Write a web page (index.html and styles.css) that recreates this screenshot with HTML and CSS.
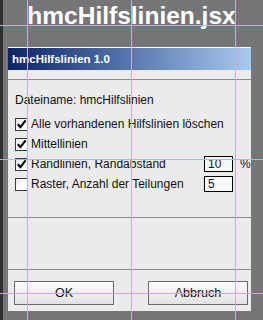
FILE: index.html
```html
<!DOCTYPE html>
<html lang="de">
<head>
<meta charset="UTF-8">
<meta name="viewport" content="width=device-width, initial-scale=1.0">
<title>hmcHilfslinien.jsx</title>
<link rel="stylesheet" href="styles.css">
</head>
<body>

<div class="screen">
  <h1 class="script-name">hmcHilfslinien.jsx</h1>

  <div class="dialog">
    <div class="titlebar">hmcHilfslinien 1.0</div>

    <div class="panel panel-main">
      <p class="filename">Dateiname: hmcHilfslinien</p>

      <div class="option">
        <span class="check checked"><svg viewBox="0 0 13 13"><path d="M2.8 6.2 L5.4 9.2 L10.6 2.4"/></svg></span>
        <span class="option-text">Alle vorhandenen Hilfslinien löschen</span>
      </div>
      <div class="option">
        <span class="check checked"><svg viewBox="0 0 13 13"><path d="M2.8 6.2 L5.4 9.2 L10.6 2.4"/></svg></span>
        <span class="option-text">Mittellinien</span>
      </div>
      <div class="option">
        <span class="check checked"><svg viewBox="0 0 13 13"><path d="M2.8 6.2 L5.4 9.2 L10.6 2.4"/></svg></span>
        <span class="option-text">Randlinien, Randabstand</span>
        <span class="field">10</span>
        <span class="unit">%</span>
      </div>
      <div class="option">
        <span class="check"></span>
        <span class="option-text">Raster, Anzahl der Teilungen</span>
        <span class="field">5</span>
        <span class="unit"></span>
      </div>
    </div>

    <div class="panel panel-empty"></div>

    <div class="buttons">
      <button class="btn">OK</button>
      <button class="btn">Abbruch</button>
    </div>
  </div>

  <!-- guides lie over everything -->
  <div class="guide guide-v" style="left:27px"></div>
  <div class="guide guide-v" style="left:131px"></div>
  <div class="guide guide-v" style="left:235px"></div>
  <div class="guide guide-h" style="top:25px"></div>
  <div class="guide guide-h" style="top:159px"></div>
  <div class="guide guide-h" style="top:293px"></div>
</div>

</body>
</html>
```

FILE: styles.css
```css
* {
  box-sizing: border-box;
  font-family: "Liberation Sans", Arial, sans-serif;
}
body {
  margin: 0;
  background: #777;
}
.screen {
  position: relative;
  width: 263px;
  height: 320px;
  overflow: hidden;
  background: #767676;
  box-shadow: inset 3px 0 0 #2f2f2f;
}

.script-name {
  margin: 0;
  height: 47px;
  padding-top: 4px;
  font-size: 24.5px;
  line-height: 1;
  font-weight: bold;
  color: #fff;
  text-align: center;
}

.dialog {
  margin: 0 12px 0 8px;
  height: 264px;
  background: #ebebeb;
  border-top: 1px solid #fff;
  display: flex;
  flex-direction: column;
}

.titlebar {
  height: 22px;
  padding-left: 4px;
  line-height: 22px;
  font-size: 11.5px;
  font-weight: bold;
  color: #fff;
  background: linear-gradient(90deg, #0a246a, #a6caf0);
}

.panel { border-top: 1px solid #8a8a8a; }
.panel-main {
  margin-top: 9px;
  height: 138px;
  padding: 10px 0 0 7px;
}
.panel-empty { height: 52px; }

.filename {
  margin: 0 0 4px;
  font-size: 12px;
  line-height: 20px;
  color: #111;
}

.option {
  display: flex;
  align-items: center;
  height: 20px;
  font-size: 12px;
  color: #111;
}
.option-text { flex: 1; }

.check {
  width: 13px;
  height: 13px;
  margin-right: 3px;
  border: 1px solid #3a3a3a;
  background: linear-gradient(135deg, #e8e8e8, #fff 60%);
}
.check svg {
  display: block;
  width: 13px;
  height: 13px;
  margin: -1px 0 0 -1px;
  overflow: visible;
}
.check path {
  fill: none;
  stroke: #000;
  stroke-width: 2.1;
}

.field {
  width: 29px;
  height: 16px;
  padding-left: 3px;
  border: 1px solid #000;
  background: #f8f8f8;
  line-height: 14px;
}
.unit {
  width: 18px;
  padding-left: 7px;
}

.buttons {
  flex: 1;
  border-top: 1px solid #8a8a8a;
  padding: 11px 3px 0 6px;
  display: flex;
  justify-content: space-between;
}
.btn {
  width: 100px;
  height: 24px;
  padding: 0;
  border: 1px solid #6a6a6a;
  background: linear-gradient(#fdfdfd, #e2e2e2);
  font-size: 12.5px;
  color: #111;
}

.guide {
  position: absolute;
  background: #64dede;
}
.guide-v { top: 0; bottom: 0; width: 1px; }
.guide-h { left: 0; right: 0; height: 1px; }
```
